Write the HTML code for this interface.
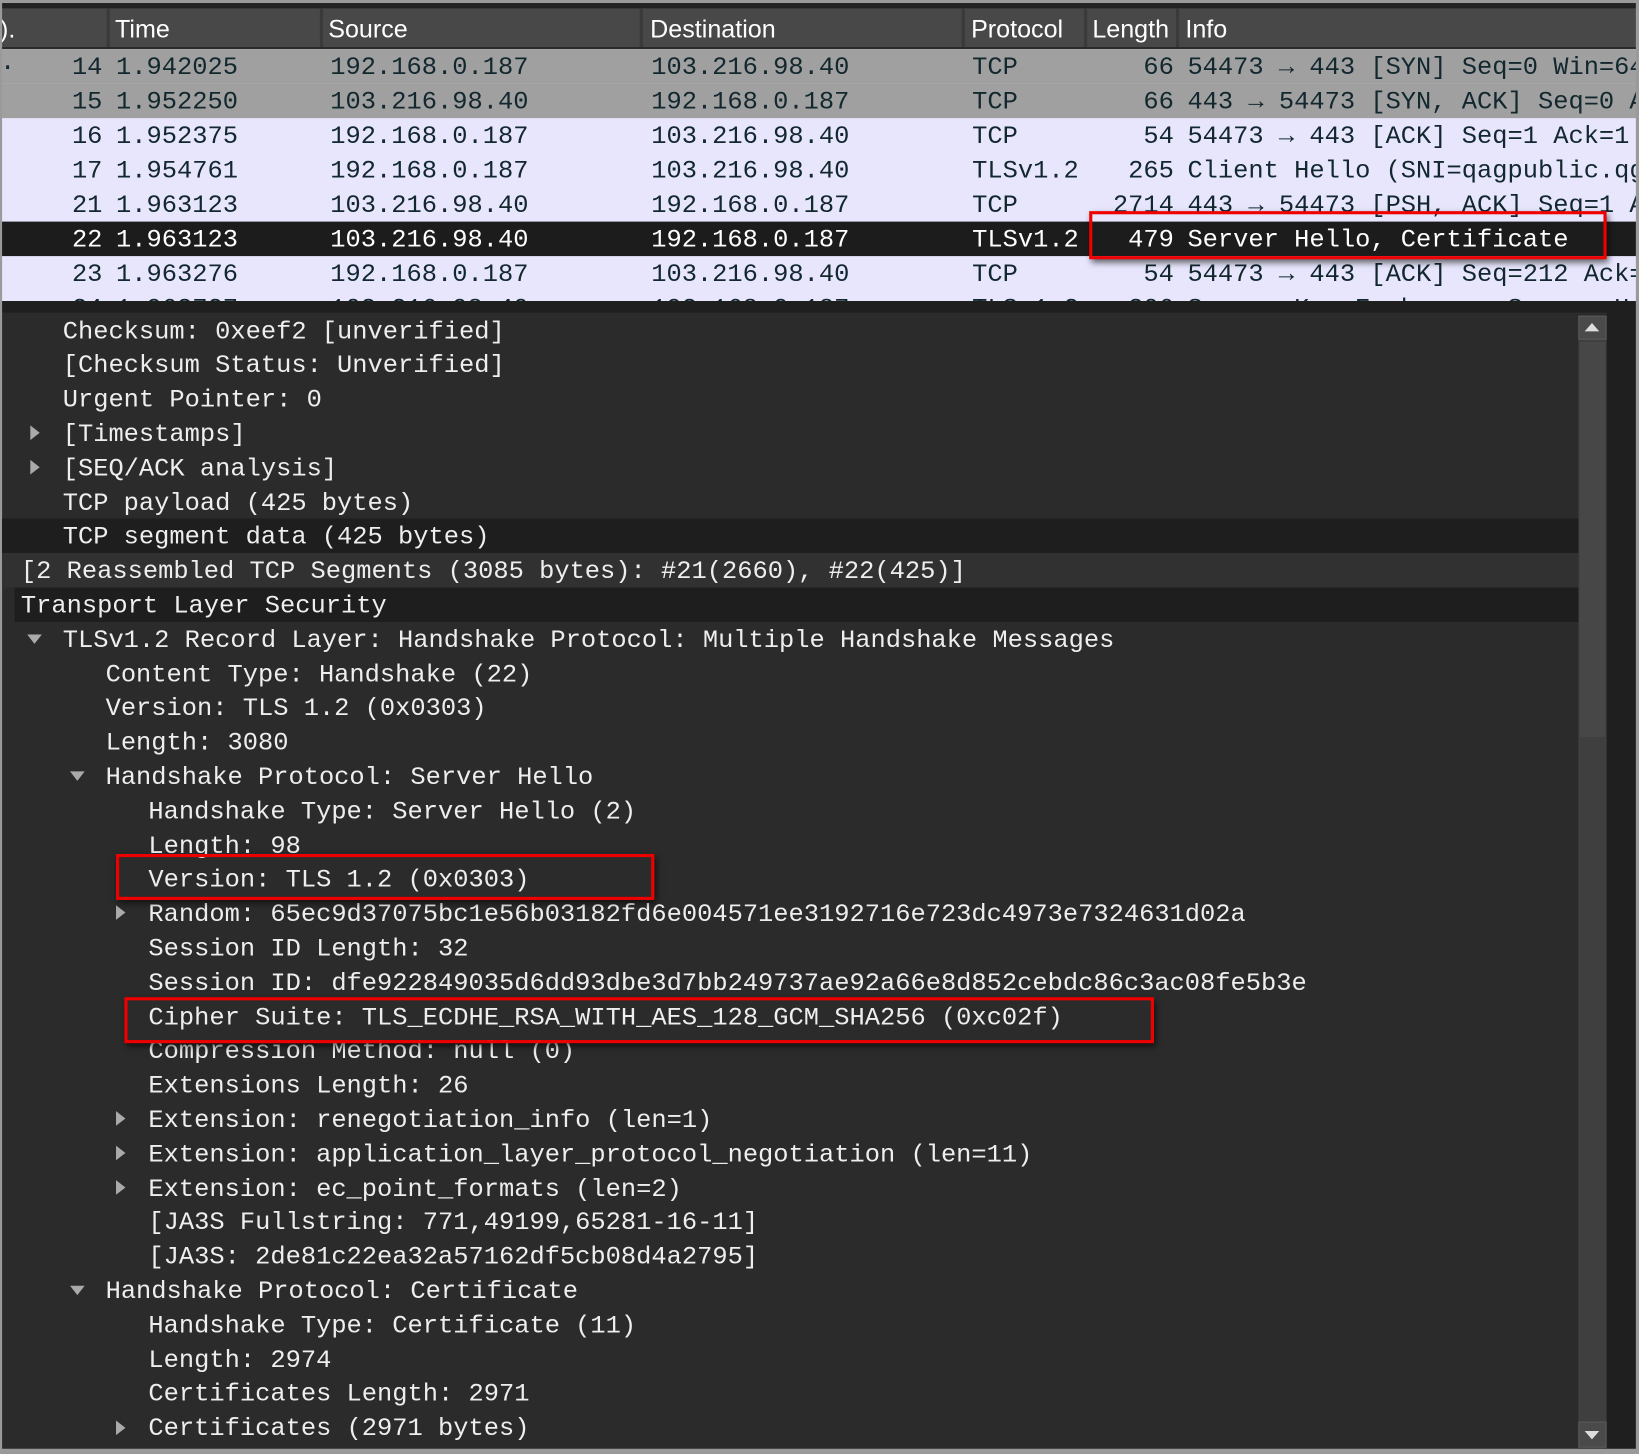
<!DOCTYPE html>
<html><head><meta charset="utf-8"><style>
html,body{margin:0;padding:0;background:#2b2b2b;width:1639px;height:1454px;overflow:hidden}
#s{position:absolute;left:0;top:0;width:1568px;height:1391px;transform:scale(1.04528);transform-origin:0 0;background:#2b2b2b;overflow:hidden}
.a{position:absolute}
.m{font-family:"Liberation Mono","DejaVu Sans Mono",monospace;font-size:24.3px;white-space:pre}
.hd{font-family:"Liberation Sans",sans-serif;font-size:24px;color:#fff;white-space:pre;top:15px}
.row{position:absolute;left:0;width:1568px;height:33px;line-height:33px;color:#12272e}
.row span{position:absolute;top:2px}
.dl{position:absolute;height:32.8px;line-height:32.8px;color:#eee;padding-top:3px;box-sizing:border-box}
.tr{position:absolute;width:0;height:0}
.r{border-left:9px solid #aaa;border-top:7px solid transparent;border-bottom:7px solid transparent}
.d{border-top:9px solid #aaa;border-left:7px solid transparent;border-right:7px solid transparent}
.box{position:absolute;border:3px solid #e00;box-shadow:2px 3px 6px rgba(0,0,0,.6)}
</style></head><body><div id="s">
<div class="a" style="left:0;top:0;width:1568px;height:3px;background:#9a9a9a"></div>
<div class="a" style="left:0;top:3px;width:1568px;height:5px;background:#222"></div>
<div class="a" style="left:0;top:8px;width:1568px;height:39px;background:#484848"></div>
<div class="a" style="left:102px;top:8px;width:3px;height:39px;background:#3a3a3a"></div>
<div class="a" style="left:306px;top:8px;width:3px;height:39px;background:#3a3a3a"></div>
<div class="a" style="left:612px;top:8px;width:3px;height:39px;background:#3a3a3a"></div>
<div class="a" style="left:920px;top:8px;width:3px;height:39px;background:#3a3a3a"></div>
<div class="a" style="left:1037px;top:8px;width:3px;height:39px;background:#3a3a3a"></div>
<div class="a" style="left:1125px;top:8px;width:3px;height:39px;background:#3a3a3a"></div>
<span class="a hd" style="left:0">).</span>
<span class="a hd" style="left:110px">Time</span>
<span class="a hd" style="left:314px">Source</span>
<span class="a hd" style="left:622px">Destination</span>
<span class="a hd" style="left:929px">Protocol</span>
<span class="a hd" style="left:1045px">Length</span>
<span class="a hd" style="left:1134px">Info</span>
<div class="a" style="left:0;top:45px;width:1568px;height:2px;background:#2a2a2a"></div>

<div class="a" style="left:0;top:47px;width:1568px;height:241px;overflow:hidden;background:#e7e6fd">
<div class="row m" style="top:0;background:#a0a0a0"><span style="left:0">·</span><span style="right:1470px">14</span><span style="left:111px">1.942025</span><span style="left:316px">192.168.0.187</span><span style="left:623px">103.216.98.40</span><span style="left:930px">TCP</span><span style="right:445px">66</span><span style="left:1136px">54473 → 443 [SYN] Seq=0 Win=64</span></div>
<div class="row m" style="top:33px;background:#a0a0a0"><span style="right:1470px">15</span><span style="left:111px">1.952250</span><span style="left:316px">103.216.98.40</span><span style="left:623px">192.168.0.187</span><span style="left:930px">TCP</span><span style="right:445px">66</span><span style="left:1136px">443 → 54473 [SYN, ACK] Seq=0 A</span></div>
<div class="row m" style="top:66px"><span style="right:1470px">16</span><span style="left:111px">1.952375</span><span style="left:316px">192.168.0.187</span><span style="left:623px">103.216.98.40</span><span style="left:930px">TCP</span><span style="right:445px">54</span><span style="left:1136px">54473 → 443 [ACK] Seq=1 Ack=1</span></div>
<div class="row m" style="top:99px"><span style="right:1470px">17</span><span style="left:111px">1.954761</span><span style="left:316px">192.168.0.187</span><span style="left:623px">103.216.98.40</span><span style="left:930px">TLSv1.2</span><span style="right:445px">265</span><span style="left:1136px">Client Hello (SNI=qagpublic.qg</span></div>
<div class="row m" style="top:132px"><span style="right:1470px">21</span><span style="left:111px">1.963123</span><span style="left:316px">103.216.98.40</span><span style="left:623px">192.168.0.187</span><span style="left:930px">TCP</span><span style="right:445px">2714</span><span style="left:1136px">443 → 54473 [PSH, ACK] Seq=1 A</span></div>
<div class="row m" style="top:165px;background:#1c1c1c;color:#fff"><span style="right:1470px">22</span><span style="left:111px">1.963123</span><span style="left:316px">103.216.98.40</span><span style="left:623px">192.168.0.187</span><span style="left:930px">TLSv1.2</span><span style="right:445px">479</span><span style="left:1136px">Server Hello, Certificate</span></div>
<div class="row m" style="top:198px"><span style="right:1470px">23</span><span style="left:111px">1.963276</span><span style="left:316px">192.168.0.187</span><span style="left:623px">103.216.98.40</span><span style="left:930px">TCP</span><span style="right:445px">54</span><span style="left:1136px">54473 → 443 [ACK] Seq=212 Ack=</span></div>
<div class="row m" style="top:231px"><span style="right:1470px">24</span><span style="left:111px">1.963727</span><span style="left:316px">103.216.98.40</span><span style="left:623px">192.168.0.187</span><span style="left:930px">TLSv1.2</span><span style="right:445px">306</span><span style="left:1136px">Server Key Exchange, Server Hello Done</span></div>
</div>
<div class="box" style="left:1042px;top:202px;width:489px;height:40px"></div>
<div class="a" style="left:0;top:288px;width:1568px;height:11px;background:#1f1f1f"></div>

<div class="a" style="left:1537px;top:299px;width:31px;height:1092px;background:#1f1f1f"></div>
<div class="a" style="left:1565px;top:0;width:3px;height:1391px;background:#9a9a9a"></div>
<div class="a" style="left:1510px;top:302px;width:27px;height:1083px;background:#3f3f3f"></div>
<div class="a" style="left:1510px;top:302px;width:27px;height:23px;background:#4a4a4a;border:1px solid #5a5a5a;box-sizing:border-box"></div>
<div class="tr" style="left:1516px;top:309px;border-bottom:8px solid #ddd;border-left:7px solid transparent;border-right:7px solid transparent"></div>
<div class="a" style="left:1511px;top:327px;width:25px;height:378px;background:#474747"></div>
<div class="a" style="left:1510px;top:1360px;width:27px;height:25px;background:#4a4a4a;border:1px solid #5a5a5a;box-sizing:border-box"></div>
<div class="tr" style="left:1516px;top:1369px;border-top:8px solid #ddd;border-left:7px solid transparent;border-right:7px solid transparent"></div>
<div class="a" style="left:0;top:1386px;width:1568px;height:5px;background:#9a9a9a"></div>
<div class="a" style="left:0;top:0;width:2px;height:1391px;background:#9a9a9a"></div>

<div class="a" style="left:2px;top:496px;width:1508px;height:33px;background:#1e1e1e"></div>
<div class="a" style="left:2px;top:529px;width:1508px;height:33px;background:#313131"></div>
<div class="a" style="left:14px;top:562px;width:1496px;height:33px;background:#1e1e1e"></div>

<div class="dl m" style="left:60px;top:299.6px">Checksum: 0xeef2 [unverified]</div>
<div class="dl m" style="left:60px;top:332.4px">[Checksum Status: Unverified]</div>
<div class="dl m" style="left:60px;top:365.2px">Urgent Pointer: 0</div>
<div class="tr r" style="left:29px;top:407px"></div><div class="dl m" style="left:60px;top:398px">[Timestamps]</div>
<div class="tr r" style="left:29px;top:440px"></div><div class="dl m" style="left:60px;top:430.8px">[SEQ/ACK analysis]</div>
<div class="dl m" style="left:60px;top:463.6px">TCP payload (425 bytes)</div>
<div class="dl m" style="left:60px;top:496.4px">TCP segment data (425 bytes)</div>
<div class="dl m" style="left:20px;top:529.2px">[2 Reassembled TCP Segments (3085 bytes): #21(2660), #22(425)]</div>
<div class="dl m" style="left:20px;top:562px">Transport Layer Security</div>
<div class="tr d" style="left:26px;top:607px"></div><div class="dl m" style="left:60px;top:594.8px">TLSv1.2 Record Layer: Handshake Protocol: Multiple Handshake Messages</div>
<div class="dl m" style="left:101px;top:627.6px">Content Type: Handshake (22)</div>
<div class="dl m" style="left:101px;top:660.4px">Version: TLS 1.2 (0x0303)</div>
<div class="dl m" style="left:101px;top:693.2px">Length: 3080</div>
<div class="tr d" style="left:67px;top:738px"></div><div class="dl m" style="left:101px;top:726px">Handshake Protocol: Server Hello</div>
<div class="dl m" style="left:142px;top:758.8px">Handshake Type: Server Hello (2)</div>
<div class="dl m" style="left:142px;top:791.6px">Length: 98</div>
<div class="dl m" style="left:142px;top:824.4px">Version: TLS 1.2 (0x0303)</div>
<div class="tr r" style="left:111px;top:866px"></div><div class="dl m" style="left:142px;top:857.2px">Random: 65ec9d37075bc1e56b03182fd6e004571ee3192716e723dc4973e7324631d02a</div>
<div class="dl m" style="left:142px;top:890px">Session ID Length: 32</div>
<div class="dl m" style="left:142px;top:922.8px">Session ID: dfe922849035d6dd93dbe3d7bb249737ae92a66e8d852cebdc86c3ac08fe5b3e</div>
<div class="dl m" style="left:142px;top:955.6px">Cipher Suite: TLS_ECDHE_RSA_WITH_AES_128_GCM_SHA256 (0xc02f)</div>
<div class="dl m" style="left:142px;top:988.4px">Compression Method: null (0)</div>
<div class="dl m" style="left:142px;top:1021.2px">Extensions Length: 26</div>
<div class="tr r" style="left:111px;top:1063px"></div><div class="dl m" style="left:142px;top:1054px">Extension: renegotiation_info (len=1)</div>
<div class="tr r" style="left:111px;top:1096px"></div><div class="dl m" style="left:142px;top:1086.8px">Extension: application_layer_protocol_negotiation (len=11)</div>
<div class="tr r" style="left:111px;top:1129px"></div><div class="dl m" style="left:142px;top:1119.6px">Extension: ec_point_formats (len=2)</div>
<div class="dl m" style="left:142px;top:1152.4px">[JA3S Fullstring: 771,49199,65281-16-11]</div>
<div class="dl m" style="left:142px;top:1185.2px">[JA3S: 2de81c22ea32a57162df5cb08d4a2795]</div>
<div class="tr d" style="left:67px;top:1230px"></div><div class="dl m" style="left:101px;top:1218px">Handshake Protocol: Certificate</div>
<div class="dl m" style="left:142px;top:1250.8px">Handshake Type: Certificate (11)</div>
<div class="dl m" style="left:142px;top:1283.6px">Length: 2974</div>
<div class="dl m" style="left:142px;top:1316.4px">Certificates Length: 2971</div>
<div class="tr r" style="left:111px;top:1359px"></div><div class="dl m" style="left:142px;top:1349.2px">Certificates (2971 bytes)</div>

<div class="box" style="left:111px;top:817px;width:509px;height:38px"></div>
<div class="box" style="left:119px;top:954px;width:979px;height:38px"></div>
</div></body></html>
